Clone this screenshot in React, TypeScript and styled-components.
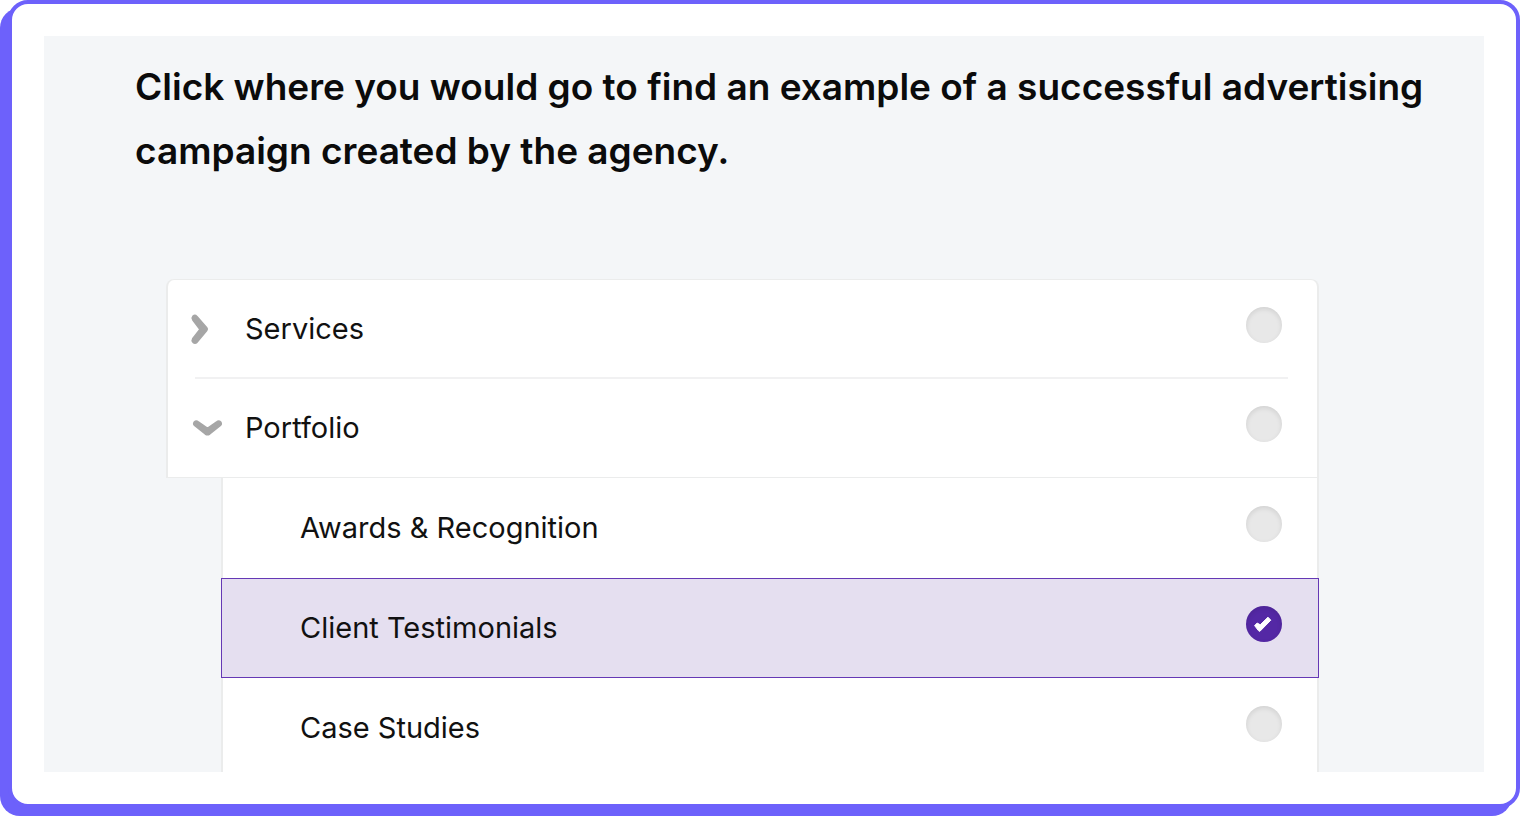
import React, { useState } from "react";
import styled, { createGlobalStyle } from "styled-components";

const GlobalStyle = createGlobalStyle`
  *, *::before, *::after { box-sizing: border-box; }
  body {
    margin: 0;
    background: #ffffff;
    color: #111111;
    font-family: Inter, "Liberation Sans", sans-serif;
  }
`;

const Page = styled.div`
  height: 100vh;
  padding: 0 0 8px 8px;
  overflow: hidden;
`;

const Frame = styled.div`
  height: 100%;
  padding: 32px;
  display: flex;
  background: #ffffff;
  border: 4px solid #6d61fb;
  border-radius: 20px;
  box-shadow: -8px 8px 0 #6d61fb;
`;

const Panel = styled.main`
  flex: 1;
  min-width: 0;
  overflow-y: auto;
  scrollbar-width: none;
  background: #f4f6f8;
`;

const Question = styled.h1`
  margin: 0;
  padding: 19px 40px 0 91px;
  font-size: 37px;
  font-weight: 600;
  line-height: 64px;
  color: #0b0b0b;
`;

const Tree = styled.ul`
  list-style: none;
  margin: 96px 165px 0 122px;
  padding: 0;
`;

const Branch = styled.ul`
  list-style: none;
  margin: 0 0 0 55px;
  padding: 0;
`;

const Row = styled.div<{ $selected?: boolean; $first?: boolean; $closing?: boolean }>`
  display: grid;
  grid-template-columns: 77px 1fr auto;
  align-items: center;
  height: ${(p) => (p.$first ? "99px" : "100px")};
  padding-right: 35px;
  background: ${(p) => (p.$selected ? "#e5dff0" : "#ffffff")};
  border: 0 solid ${(p) => (p.$selected ? "transparent" : "#ebecec")};
  border-width: ${(p) => (p.$first ? "1px 2px 0" : p.$closing ? "0 2px 1px" : "0 2px")};
  border-radius: ${(p) => (p.$first ? "8px 8px 0 0" : "0")};
  outline: ${(p) => (p.$selected ? "1px solid #6538b5" : "none")};
  outline-offset: -1px;
`;

const Divider = styled.div`
  height: 2px;
  margin: -1px 31px -1px 29px;
  background: #f1f1f2;
  position: relative;
`;

const Toggle = styled.button`
  width: 36px;
  height: 36px;
  margin-left: 20px;
  padding: 0;
  border: 0;
  background: none;
  cursor: pointer;
  svg { display: block; }
`;

const Label = styled.label`
  grid-column: 2;
  font-size: 29px;
  line-height: 40px;
  cursor: pointer;
`;

const RadioBox = styled.span`
  position: relative;
  width: 36px;
  height: 36px;
  margin-bottom: 8px;
  svg { position: absolute; inset: 0; pointer-events: none; }
`;

const Radio = styled.input`
  appearance: none;
  display: block;
  width: 36px;
  height: 36px;
  margin: 0;
  border-radius: 50%;
  background: #e8e8e8;
  box-shadow: inset 0 2px 5px rgba(0, 0, 0, 0.1);
  cursor: pointer;
  &:checked {
    background: #5428a5;
  }
`;

const Chevron = ({ open }: { open: boolean }) => (
  <svg width="36" height="36" viewBox="0 0 36 36" fill="#a6a6a6" stroke="#a6a6a6" strokeWidth="2" strokeLinejoin="round" aria-hidden="true">
    <path
      d={
        open
          ? "M6.4 12.2 Q8.2 10.4 10.2 12 L19.5 18.6 L28.8 12 Q30.8 10.4 32.6 12.2 Q33.8 14 32 15.4 L21.6 23.8 Q19.5 25.2 17.4 23.8 L7 15.4 Q5.2 14 6.4 12.2 Z"
          : "M5.2 5.2 Q7 3.8 8.8 5.6 L18.6 17 Q19.6 18.2 18.6 19.4 L8.8 31.2 Q7 32.8 5.2 31.2 Q3.8 29.6 5 27.6 L12.2 18.4 L5 8.8 Q3.8 6.8 5.2 5.2 Z"
      }
    />
  </svg>
);

const Check = () => (
  <svg width="36" height="36" viewBox="0 0 36 36" fill="#ffffff" stroke="#ffffff" strokeWidth="1" strokeLinejoin="round" aria-hidden="true">
    <path d="M8.6 19.6 L11.2 17 L14.2 18.8 L22 11.2 L24.8 14.2 L13.8 25.4 L12.4 24.6 Z" />
  </svg>
);

interface OptionProps {
  id: string;
  label: string;
  value: string;
  onPick: (id: string) => void;
  open?: boolean;
  onToggle?: () => void;
  first?: boolean;
  closing?: boolean;
}

function Option({ id, label, value, onPick, open, onToggle, first, closing }: OptionProps) {
  const selected = value === id;
  return (
    <Row $selected={selected} $first={first} $closing={closing}>
      {onToggle && (
        <Toggle type="button" aria-label={`Toggle ${label}`} aria-expanded={open} onClick={onToggle}>
          <Chevron open={!!open} />
        </Toggle>
      )}
      <Label htmlFor={id}>{label}</Label>
      <RadioBox>
        <Radio type="radio" id={id} name="destination" checked={selected} onChange={() => onPick(id)} />
        {selected && <Check />}
      </RadioBox>
    </Row>
  );
}

const portfolio = [
  { id: "awards", label: "Awards & Recognition" },
  { id: "testimonials", label: "Client Testimonials" },
  { id: "cases", label: "Case Studies" },
];

export default function App() {
  const [value, setValue] = useState("testimonials");
  const [servicesOpen, setServicesOpen] = useState(false);
  const [portfolioOpen, setPortfolioOpen] = useState(true);

  return (
    <Page>
      <GlobalStyle />
      <Frame>
        <Panel>
          <Question>
            Click where you would go to find an example of a successful advertising campaign created by the agency.
          </Question>
          <Tree>
            <li>
              <Option id="services" label="Services" value={value} onPick={setValue} first
                open={servicesOpen} onToggle={() => setServicesOpen(!servicesOpen)} />
              <Divider />
            </li>
            <li>
              <Option id="portfolio" label="Portfolio" value={value} onPick={setValue} closing
                open={portfolioOpen} onToggle={() => setPortfolioOpen(!portfolioOpen)} />
              {portfolioOpen && (
                <Branch>
                  {portfolio.map((item) => (
                    <li key={item.id}>
                      <Option id={item.id} label={item.label} value={value} onPick={setValue} />
                    </li>
                  ))}
                </Branch>
              )}
            </li>
          </Tree>
        </Panel>
      </Frame>
    </Page>
  );
}
